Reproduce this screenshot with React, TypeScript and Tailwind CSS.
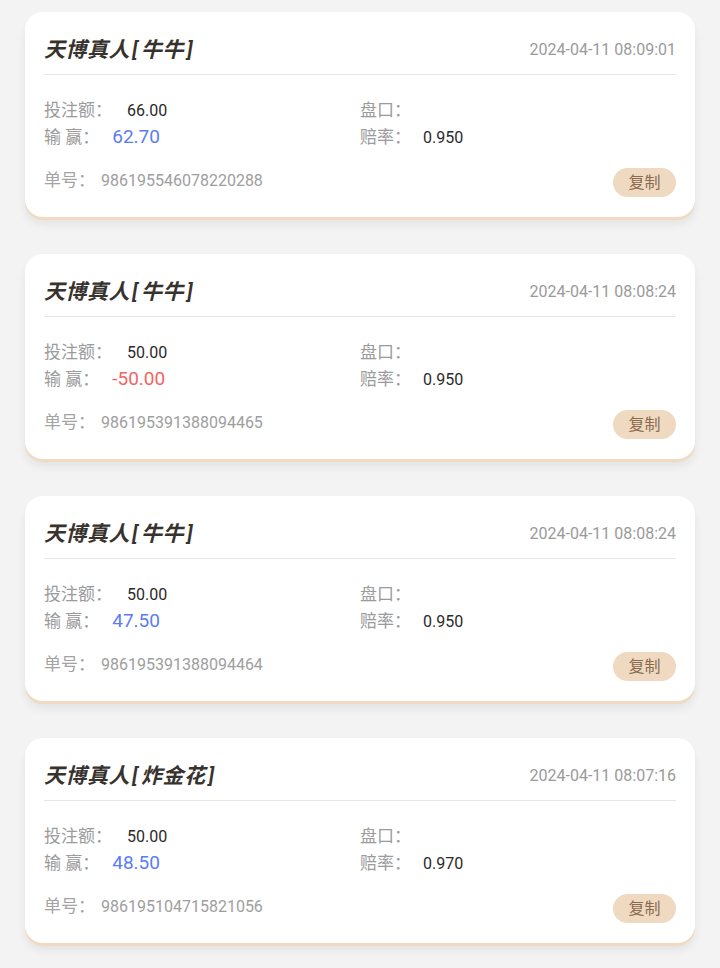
import React from "react";

type Bet = {
  game: string;
  time: string;
  amount: string;
  win: string;
  odds: string;
  orderNo: string;
};

const bets: Bet[] = [
  { game: "牛牛", time: "2024-04-11 08:09:01", amount: "66.00", win: "62.70", odds: "0.950", orderNo: "986195546078220288" },
  { game: "牛牛", time: "2024-04-11 08:08:24", amount: "50.00", win: "-50.00", odds: "0.950", orderNo: "986195391388094465" },
  { game: "牛牛", time: "2024-04-11 08:08:24", amount: "50.00", win: "47.50", odds: "0.950", orderNo: "986195391388094464" },
  { game: "炸金花", time: "2024-04-11 08:07:16", amount: "50.00", win: "48.50", odds: "0.970", orderNo: "986195104715821056" },
];

const font = "font-['Roboto','Noto_Sans_CJK_SC',sans-serif]";

const BetCard: React.FC<{ bet: Bet }> = ({ bet }) => {
  const lost = bet.win.startsWith("-");
  return (
    <div className="bg-white rounded-[18px] px-[19px] pt-[24px] pb-[18px] shadow-[0_2px_0_#fff,0_5px_0_#f1dac3,0_9px_10px_rgba(0,0,0,0.07)]">
      {/* 标题 */}
      <div className="flex items-center justify-between h-[28px]">
        <div className="text-[21px] font-semibold italic text-[#38322e] leading-[28px] tracking-[0.5px]">
          天博真人<span className="ml-[2px] mr-[3px]">[</span>
          {bet.game}
          <span className="ml-[3px]">]</span>
        </div>
        <div className="text-[16px] text-[#9a9a9a] leading-[28px]">{bet.time}</div>
      </div>
      <div className="mt-[10px] h-px bg-[#e6e6e6]" />

      {/* 详情 */}
      <div className="mt-[22px] grid grid-cols-2">
        <div className="flex items-center h-[27px]">
          <span className="text-[17px] text-[#9b9b9b]">投注额：</span>
          <span className="ml-[15px] text-[16px] text-[#2a2a2a]">{bet.amount}</span>
        </div>
        <div className="flex items-center h-[27px]">
          <span className="text-[17px] text-[#9b9b9b]">盘口：</span>
        </div>
        <div className="flex items-center h-[27px]">
          <span className="text-[17px] text-[#9b9b9b]">输 赢：</span>
          <span className={`ml-[13px] text-[19px] ${lost ? "text-[#f16565]" : "text-[#5b7cf2]"}`}>{bet.win}</span>
        </div>
        <div className="flex items-center h-[27px]">
          <span className="text-[17px] text-[#9b9b9b]">赔率：</span>
          <span className="ml-[12px] text-[16px] text-[#2a2a2a]">{bet.odds}</span>
        </div>
      </div>

      {/* 单号 */}
      <div className="mt-[17px] flex items-start justify-between">
        <div className="flex items-center h-[25px]">
          <span className="text-[17px] text-[#a3a3a3]">单号：</span>
          <span className="ml-[6px] text-[16px] text-[#9e9e9e]">{bet.orderNo}</span>
        </div>
        <button className="w-[63px] h-[29px] rounded-full bg-[#efd9c1] text-[16px] text-[#8a6a4f] flex items-center justify-center">
          复制
        </button>
      </div>
    </div>
  );
};

const App: React.FC = () => {
  return (
    <div className={`min-h-screen w-full bg-[#f3f3f3] px-[25px] pt-[12px] pb-[20px] flex flex-col gap-[39px] ${font}`}>
      {bets.map((b) => (
        <BetCard key={b.orderNo} bet={b} />
      ))}
    </div>
  );
};

export default App;
